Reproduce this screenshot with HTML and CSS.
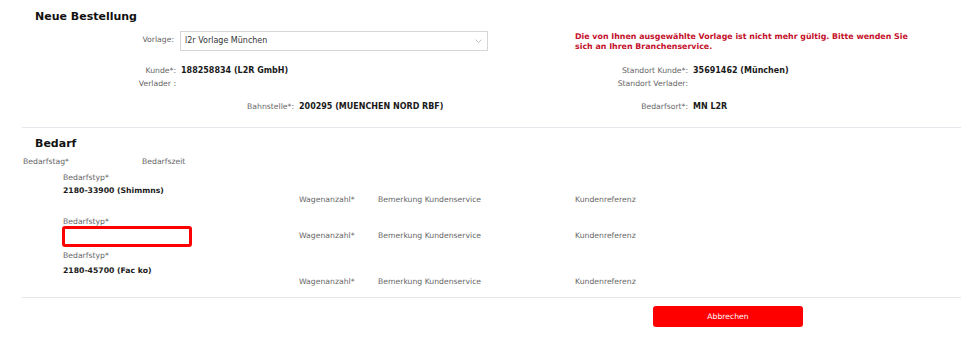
FILE: index.html
```html
<!DOCTYPE html>
<html lang="de">
<head>
<meta charset="utf-8">
<title>Neue Bestellung</title>
<link rel="stylesheet" href="styles.css">
</head>
<body>
<div class="page">
  <section class="order">
    <h2 class="title">Neue Bestellung</h2>
    <div class="row-template">
      <label class="lbl lbl-template">Vorlage:</label>
      <div class="select">
        <span class="select-text">l2r Vorlage München</span>
        <svg class="chev" width="7" height="4" viewBox="0 0 7 4"><path d="M0.5 0.5 L3.5 3.5 L6.5 0.5" fill="none" stroke="#c4c4c4" stroke-width="1"/></svg>
      </div>
      <div class="error">Die von Ihnen ausgewählte Vorlage ist nicht mehr gültig. Bitte wenden Sie sich an Ihren Branchenservice.</div>
    </div>
    <div class="grid-pair">
      <span class="lbl r">Kunde*:</span><span class="val">188258834 (L2R GmbH)</span>
      <span class="lbl r">Standort Kunde*:</span><span class="val">35691462 (München)</span>
      <span class="lbl r">Verlader :</span><span class="val"></span>
      <span class="lbl r">Standort Verlader:</span><span class="val"></span>
    </div>
    <div class="grid-pair grid-bahn">
      <span class="lbl r">Bahnstelle*:</span><span class="val">200295 (MUENCHEN NORD RBF)</span>
      <span class="lbl r">Bedarfsort*:</span><span class="val">MN L2R</span>
    </div>
  </section>
  <hr class="divider">
  <section class="need">
    <h2 class="title title-need">Bedarf</h2>
    <div class="day-row">
      <span class="lbl">Bedarfstag*</span>
      <span class="lbl">Bedarfszeit</span>
    </div>
    <div class="item item-static">
      <span class="lbl type-label">Bedarfstyp*</span>
      <span class="val type-value">2180-33900 (Shimmns)</span>
      <span class="lbl c2">Wagenanzahl*</span>
      <span class="lbl c3">Bemerkung Kundenservice</span>
      <span class="lbl c4">Kundenreferenz</span>
    </div>
    <div class="item item-input">
      <span class="lbl type-label">Bedarfstyp*</span>
      <span class="type-input"></span>
      <span class="lbl c2">Wagenanzahl*</span>
      <span class="lbl c3">Bemerkung Kundenservice</span>
      <span class="lbl c4">Kundenreferenz</span>
    </div>
    <div class="item item-static item-last">
      <span class="lbl type-label">Bedarfstyp*</span>
      <span class="val type-value">2180-45700 (Fac ko)</span>
      <span class="lbl c2">Wagenanzahl*</span>
      <span class="lbl c3">Bemerkung Kundenservice</span>
      <span class="lbl c4">Kundenreferenz</span>
    </div>
  </section>
  <hr class="divider divider-bottom">
  <div class="actions">
    <button class="btn-cancel" type="button">Abbrechen</button>
  </div>
</div>
</body>
</html>
```

FILE: styles.css
```css
* { box-sizing: border-box; }
html, body { margin: 0; padding: 0; background: #fff; }
body {
  font-family: "DejaVu Sans", Verdana, sans-serif;
  font-size: 7.7px;
  color: #222;
}
.page {
  margin-left: 22px;
  width: 939px;
  padding-top: 10px;
}
.title {
  margin: 0 0 0 13px;
  font-size: 11px;
  line-height: 13px;
  font-weight: bold;
  color: #111;
}
.lbl { color: #666; line-height: 13px; white-space: nowrap; }
.r { text-align: right; }
.val { font-weight: bold; color: #1a1a1a; line-height: 13px; white-space: nowrap; }

.row-template {
  display: flex;
  align-items: center;
  margin-top: 6px;
}
.lbl-template { width: 152px; text-align: right; margin-right: 6px; position: relative; top: -1px; }
.select {
  width: 308px;
  height: 20px;
  border: 1px solid #d6d6d6;
  display: flex;
  align-items: center;
  justify-content: space-between;
  padding: 0 5px 0 4px;
  color: #333;
  font-size: 8px;
}
.error {
  align-self: flex-start;
  margin: 3px 0 0 87px;
  width: 345px;
  color: #c4102b;
  font-weight: bold;
  font-size: 7.9px;
  line-height: 10px;
}
.grid-pair {
  display: grid;
  grid-template-columns: 154px 352px 150px 1fr;
  column-gap: 5px;
  margin-top: 12px;
}
.grid-pair .val { font-size: 8px; }
.grid-bahn {
  grid-template-columns: 272px 234px 150px 1fr;
  margin-top: 10px;
}
.divider {
  border: 0;
  border-top: 1px solid #e3e6ea;
  margin: 14px 0 0 0;
  height: 0;
}
.title-need { margin-top: 9px; }
.day-row {
  display: grid;
  grid-template-columns: 119px 1fr;
  padding-left: 1px;
  margin-top: 5px;
}
.item {
  display: grid;
  grid-template-columns: 236px 79px 197px 1fr;
  padding-left: 41px;
  margin-top: 3px;
}
.type-label { grid-column: 1; grid-row: 1; }
.type-value { grid-column: 1; grid-row: 2; }
.item-static .c2, .item-static .c3, .item-static .c4 { grid-row: 3; margin-top: -4px; }
.c2 { grid-column: 2; }
.c3 { grid-column: 3; }
.c4 { grid-column: 4; }
.item-input { margin-top: 9px; }
.type-input {
  grid-column: 1; grid-row: 2;
  width: 130px;
  height: 21px;
  margin-left: -1px;
  margin-top: -2px;
  border: 3px solid #ff0000;
  border-radius: 3px;
  background: #fff;
}
.item-input .c2, .item-input .c3, .item-input .c4 { grid-row: 2; align-self: start; margin-top: 1px; }
.item-last { margin-top: 2px; }
.item-last .type-value { margin-top: 2px; }
.item-last .c2, .item-last .c3, .item-last .c4 { margin-top: -2px; }
.divider-bottom { margin-top: 9px; }
.actions {
  padding-left: 631px;
  margin-top: 8px;
}
.btn-cancel {
  width: 150px;
  height: 21px;
  border: 0;
  border-radius: 3px;
  background: #ff0000;
  color: #fff;
  font-family: "DejaVu Sans", Verdana, sans-serif;
  font-size: 7.7px;
  padding: 0;
}
```
